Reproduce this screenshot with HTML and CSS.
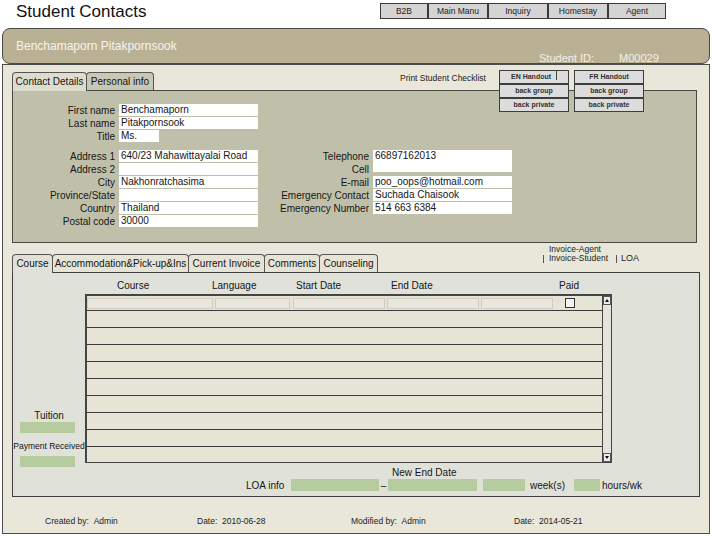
FILE: index.html
```html
<!DOCTYPE html>
<html>
<head>
<meta charset="utf-8">
<title>Student Contacts</title>
<link rel="stylesheet" href="styles.css">
</head>
<body>
<div class="top">
  <h1 class="title">Student Contacts</h1>
  <nav class="nav">
    <span class="nav-btn w48">B2B</span>
    <span class="nav-btn w60">Main Manu</span>
    <span class="nav-btn w60">Inquiry</span>
    <span class="nav-btn w60">Homestay</span>
    <span class="nav-btn w58">Agent</span>
  </nav>
</div>

<div class="header">
  <div class="hname">Benchamaporn Pitakpornsook</div>
  <div class="hid"><span class="hid-label">Student ID:</span><span>M00029</span></div>
</div>

<div class="main">
  <section class="contact">
    <div class="ctabs">
      <span class="ctab ctab-active">Contact Details</span>
      <span class="ctab ctab-inactive">Personal info</span>
      <span class="checklist">Print Student Checklist</span>
      <div class="handouts">
        <span class="hbtn">EN Handout <span class="caret"></span></span>
        <span class="hbtn">FR Handout</span>
        <span class="hbtn">back group</span>
        <span class="hbtn">back group</span>
        <span class="hbtn">back private</span>
        <span class="hbtn">back private</span>
      </div>
    </div>
    <div class="cpanel">
      <div class="form">
        <span class="lbl c1">First name</span><span class="inp c2">Benchamaporn</span>
        <span class="lbl c1">Last name</span><span class="inp c2">Pitakpornsook</span>
        <span class="lbl c1">Title</span><span class="inp c2 short">Ms.</span>
        <span class="spacer c1"></span>
        <span class="lbl c1">Address 1</span><span class="inp c2">640/23 Mahawittayalai Road</span>
        <span class="lbl c4">Telephone</span><span class="inp c5 tall">66897162013</span>
        <span class="lbl c1">Address 2</span><span class="inp c2"></span>
        <span class="lbl c4">Cell</span>
        <span class="lbl c1">City</span><span class="inp c2">Nakhonratchasima</span>
        <span class="lbl c4">E-mail</span><span class="inp c5">poo_oops@hotmail.com</span>
        <span class="lbl c1">Province/State</span><span class="inp c2"></span>
        <span class="lbl c4">Emergency Contact</span><span class="inp c5">Suchada Chaisook</span>
        <span class="lbl c1">Country</span><span class="inp c2">Thailand</span>
        <span class="lbl c4">Emergency Number</span><span class="inp c5">514 663 6384</span>
        <span class="lbl c1">Postal code</span><span class="inp c2">30000</span>
      </div>
    </div>
  </section>

  <section class="course">
    <div class="chead">
      <span class="ttab ttab-active t1">Course</span>
      <span class="ttab t2">Accommodation&amp;Pick-up&amp;Ins</span>
      <span class="ttab t3">Current Invoice</span>
      <span class="ttab t4">Comments</span>
      <span class="ttab t5">Counseling</span>
      <div class="links">
        <div class="link1">Invoice-Agent</div>
        <div class="link2"><span class="bar"></span><span>Invoice-Student</span><span class="bar bar2"></span><span class="loa-link">LOA</span></div>
      </div>
    </div>
    <div class="cpanel2">
      <div class="colheads">
        <span class="ch-course">Course</span>
        <span class="ch-lang">Language</span>
        <span class="ch-start">Start Date</span>
        <span class="ch-end">End Date</span>
        <span class="ch-paid">Paid</span>
      </div>
      <div class="side">
        <div class="side-lbl">Tuition</div>
        <div class="gbox"></div>
        <div class="side-lbl2">Payment Received</div>
        <div class="gbox gbox2"></div>
      </div>
      <div class="tbl">
        <div class="tdata">
          <div class="trow0">
            <span class="cell cw1"></span>
            <span class="cell cw2"></span>
            <span class="cell cw3"></span>
            <span class="cell cw4"></span>
            <span class="cell cw5"></span>
            <span class="chk"></span>
          </div>
          <div class="trow"></div>
          <div class="trow"></div>
          <div class="trow"></div>
          <div class="trow"></div>
          <div class="trow"></div>
          <div class="trow"></div>
          <div class="trow"></div>
          <div class="trow"></div>
          <div class="trow"></div>
        </div>
        <div class="scroll">
          <span class="arrow"><span class="tri-up"></span></span>
          <span class="arrow"><span class="tri-down"></span></span>
        </div>
      </div>
      <div class="below">
        <div class="newend">New End Date</div>
        <div class="loa">
          <span class="loa-lbl">LOA info</span>
          <span class="g g1"></span>
          <span class="dash">–</span>
          <span class="g g2"></span>
          <span class="g g3"></span>
          <span class="weeks">week(s)</span>
          <span class="g g4"></span>
          <span class="hours">hours/wk</span>
        </div>
      </div>
    </div>
  </section>

  <div class="foot">
    <span class="f1">Created by:&nbsp;&nbsp;Admin</span>
    <span class="f2">Date:&nbsp;&nbsp;2010-06-28</span>
    <span class="f3">Modified by:&nbsp;&nbsp;Admin</span>
    <span class="f4">Date:&nbsp;&nbsp;2014-05-21</span>
  </div>
</div>
</body>
</html>
```

FILE: styles.css
```css
* { box-sizing: border-box; margin: 0; padding: 0; }
body {
  margin: 0;
  width: 712px;
  height: 536px;
  overflow: hidden;
  background: #ffffff;
  color: #151515;
  font-family: "Liberation Sans", Arial, sans-serif;
}

/* top bar */
.top { display: flex; height: 28px; padding-left: 16px; padding-right: 46px; }
.title { font-size: 17px; font-weight: normal; line-height: 20px; padding-top: 2px; color: #111; }
.nav { display: flex; margin-left: auto; margin-top: 3px; height: 16px; }
.nav-btn {
  height: 16px;
  border: 1px solid #3a3a3a;
  background: #d4d4d4;
  font-size: 8.5px;
  line-height: 14px;
  text-align: center;
  color: #222;
}
.w48 { width: 48px; }
.w60 { width: 60px; }
.w58 { width: 58px; }

/* header */
.header {
  margin-left: 2px;
  width: 708px;
  height: 36px;
  background: #bab194;
  border: 1px solid #4b4a43;
  border-radius: 8px;
  padding-top: 11px;
  color: #f6f4ec;
}
.hname { padding-left: 13px; font-size: 12px; line-height: 12px; }
.hid { display: flex; padding-left: 536px; font-size: 11px; line-height: 12px; color: #f1efe6; }
.hid-label { width: 80px; }

/* main panel */
.main {
  margin-left: 2px;
  width: 708px;
  height: 470px;
  border: 1px solid #4d4d4d;
  background: #e9e7d9;
  padding: 7px 0 0 9px;
}

/* contact section */
.contact { width: 685px; }
.ctabs { display: flex; height: 18px; align-items: flex-end; }
.ctab {
  height: 18px;
  border: 1px solid #555;
  border-bottom: none;
  border-radius: 4px 4px 0 0;
  font-size: 10px;
  line-height: 17px;
  text-align: center;
  white-space: nowrap;
  flex-shrink: 0;
}
.ctab-active { width: 75px; background: #dedccd; position: relative; z-index: 1; height: 19px; margin-bottom: -1px; }
.ctab-inactive { width: 68px; margin-left: -1px; background: #c8c8b4; }
.checklist { align-self: flex-start; width: 99px; flex-shrink: 0; margin-left: 246px; font-size: 8.5px; line-height: 13px; white-space: nowrap; color: #222; }
.handouts {
  align-self: flex-start;
  flex-shrink: 0;
  margin-top: -2px;
  display: grid;
  grid-template-columns: 70px 70px;
  column-gap: 5px;
  position: relative;
  z-index: 2;
}
.hbtn {
  height: 14px;
  border: 1px solid #3d3d3d;
  background: #dcdcdc;
  font-size: 7px;
  font-weight: bold;
  line-height: 12px;
  text-align: center;
  color: #333;
  white-space: nowrap;
}
.caret { display: inline-block; width: 1px; height: 9px; background: #444; margin-left: 3px; vertical-align: -1px; }

.cpanel {
  height: 153px;
  border: 1px solid #4a4a44;
  background: #c0c0aa;
  padding-top: 13px;
}
.form {
  display: grid;
  grid-template-columns: 102px 139px 9px 94px 139px;
  grid-template-rows: 12px 12px 12px 6px 12px 12px 12px 12px 12px 12px;
  column-gap: 4px;
  row-gap: 1px;
  font-size: 10px;
  line-height: 13px;
}
.c1 { grid-column: 1; }
.c2 { grid-column: 2; }
.c4 { grid-column: 4; }
.c5 { grid-column: 5; }
.lbl { text-align: right; white-space: nowrap; color: #161616; }
.inp {
  background: #ffffff;
  height: 12px;
  padding-left: 2px;
  white-space: nowrap;
  overflow: hidden;
  color: #151515;
  line-height: 12px;
}
.short { width: 40px; justify-self: start; }
.tall { grid-row: span 2; height: 22px; align-self: start; }

/* course section */
.course { width: 688px; }
.chead { display: flex; height: 29px; align-items: flex-end; }
.ttab {
  height: 18px;
  border: 1px solid #555;
  border-bottom: none;
  border-radius: 4px 4px 0 0;
  background: #e6e4d6;
  font-size: 10px;
  line-height: 18px;
  text-align: center;
  white-space: nowrap;
  margin-left: -1px;
  flex-shrink: 0;
}
.t1 { width: 41px; margin-left: 0; }
.t2 { width: 137px; }
.t3 { width: 77px; }
.t4 { width: 56px; }
.t5 { width: 59px; }
.ttab-active { background: #e0e2da; position: relative; z-index: 1; height: 19px; margin-bottom: -1px; }
.links { align-self: flex-start; flex-shrink: 0; margin-top: 2px; margin-left: 165px; font-size: 8.5px; line-height: 9px; color: #1e1e1e; }
.link1 { padding-left: 6px; height: 8px; line-height: 9px; }
.link2 { display: flex; align-items: center; height: 11px; }
.loa-link { font-size: 9px; }
.bar { display: inline-block; width: 1px; height: 8px; background: #555; margin-right: 5px; }
.bar2 { margin-left: 8px; margin-right: 4px; }

.cpanel2 {
  height: 225px;
  border: 1px solid #3d3d3d;
  background: #e0e2da;
  display: grid;
  grid-template-columns: 72px 527px;
  grid-template-rows: 21px 169px auto;
}
.colheads {
  grid-column: 2;
  grid-row: 1;
  display: flex;
  padding-top: 6px;
  padding-left: 32px;
  font-size: 10px;
  line-height: 13px;
  white-space: nowrap;
}
.ch-course { width: 95px; }
.ch-lang { width: 84px; }
.ch-start { width: 95px; }
.ch-end { width: 168px; }

.side { grid-column: 1; grid-row: 2 / 4; padding-top: 116px; text-align: center; }
.side-lbl { font-size: 10px; line-height: 12px; }
.gbox { width: 55px; height: 11px; margin-left: 7px; background: #b6cc9e; }
.side-lbl2 { margin-top: 7px; font-size: 8.5px; line-height: 12px; white-space: nowrap; }
.gbox2 { margin-top: 4px; }

.tbl {
  grid-column: 2;
  grid-row: 2;
  display: flex;
  height: 169px;
  border-top: 2px solid #454545;
  border-left: 2px solid #454545;
  border-right: 1px solid #454545;
  border-bottom: 1px solid #454545;
  background: #e6e4d5;
}
.tdata { flex: 1; overflow: hidden; }
.trow0 { height: 14px; display: flex; align-items: center; }
.cell { height: 11px; background: #e9e7dc; border: 1px solid #cfcdc2; flex-shrink: 0; }
.cw1 { width: 126px; }
.cw2 { width: 75px; margin-left: 2px; }
.cw3 { width: 92px; margin-left: 3px; }
.cw4 { width: 92px; margin-left: 2px; }
.cw5 { width: 72px; margin-left: 2px; }
.chk { width: 10px; height: 10px; margin-left: 12px; border: 1px solid #333; background: #f2f2ee; flex-shrink: 0; }
.trow { height: 17px; border-top: 1px solid #3a3a3a; }
.scroll {
  width: 9px;
  border-left: 1px solid #444;
  background: #e4e4dc;
  display: flex;
  flex-direction: column;
  justify-content: space-between;
}
.arrow {
  width: 8px;
  height: 9px;
  border: 1px solid #555;
  background: #ececec;
  display: flex;
  align-items: center;
  justify-content: center;
}
.tri-up { width: 0; height: 0; border-left: 2px solid transparent; border-right: 2px solid transparent; border-bottom: 3px solid #111; }
.tri-down { width: 0; height: 0; border-left: 2px solid transparent; border-right: 2px solid transparent; border-top: 3px solid #111; }

.below { grid-column: 2; grid-row: 3; padding-top: 4px; }
.newend { padding-left: 307px; font-size: 10px; line-height: 12px; }
.loa { display: flex; height: 12px; padding-left: 161px; font-size: 10px; line-height: 13px; white-space: nowrap; }
.loa > * { flex-shrink: 0; }
.loa-lbl { width: 45px; }
.g { height: 12px; background: #b6cc9e; }
.g1 { width: 88px; }
.dash { width: 9px; text-align: center; }
.g2 { width: 89px; }
.g3 { width: 42px; margin-left: 6px; }
.weeks { width: 49px; padding-left: 5px; }
.g4 { width: 26px; }
.hours { padding-left: 2px; }

/* footer */
.foot { display: flex; margin-top: 18px; padding-left: 33px; font-size: 8.5px; line-height: 12px; white-space: nowrap; color: #222; }
.foot > * { flex-shrink: 0; }
.f1 { width: 152px; }
.f2 { width: 154px; }
.f3 { width: 163px; }
```
